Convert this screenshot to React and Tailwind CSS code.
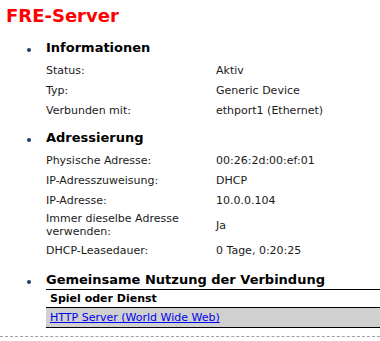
import React from 'react';

const sections = [
  {
    title: 'Informationen',
    rows: [
      ['Status:', 'Aktiv'],
      ['Typ:', 'Generic Device'],
      ['Verbunden mit:', 'ethport1 (Ethernet)'],
    ],
  },
  {
    title: 'Adressierung',
    rows: [
      ['Physische Adresse:', '00:26:2d:00:ef:01'],
      ['IP-Adresszuweisung:', 'DHCP'],
      ['IP-Adresse:', '10.0.0.104'],
      ['Immer dieselbe Adresse verwenden:', 'Ja', true],
      ['DHCP-Leasedauer:', '0 Tage, 0:20:25'],
    ],
  },
];

function Bullet() {
  return <span className="mt-[8px] ml-[27px] mr-[15px] block h-[4px] w-[4px] shrink-0 rounded-full bg-[#1f3b6b]" />;
}

function Section({ title, rows }) {
  return (
    <li className="flex">
      <Bullet />
      <div className="flex-1">
        <h2 className="text-[13px] font-bold leading-[16px] text-black">{title}</h2>
        <div className="mt-[4px] grid grid-cols-[170px_1fr] items-center">
          {rows.map(([label, value, wrap]) => (
            <React.Fragment key={label}>
              <div className={wrap ? 'py-[2px] pr-2 leading-[13px]' : 'py-[3.5px] pr-2 leading-[13px]'}>{label}</div>
              <div className="py-[3.5px] leading-[13px]">{value}</div>
            </React.Fragment>
          ))}
        </div>
      </div>
    </li>
  );
}

export default function App() {
  return (
    <div className="h-[341px] w-[380px] overflow-hidden bg-white font-['DejaVu_Sans',Verdana,sans-serif] text-[11px] text-[#1a1a1a]">
      <h1 className="pl-[6px] pt-[5px] text-[18px] font-bold leading-[22px] text-[#ff0000]">FRE-Server</h1>

      <ul className="mt-[13px] flex flex-col gap-[10px]">
        {sections.map((s) => (
          <Section key={s.title} {...s} />
        ))}

        {/* Shared connection */}
        <li className="mt-[2px] flex">
          <Bullet />
          <div className="flex-1">
            <h2 className="border-b border-black pb-[1px] text-[13px] font-bold leading-[16px] text-black">
              Gemeinsame Nutzung der Verbindung
            </h2>
            <div className="border-b border-black px-[4px] py-[2px] text-[11px] font-bold leading-[13px] text-black">
              Spiel oder Dienst
            </div>
            <div className="border-b border-black bg-[#d0d0d0] px-[4px] py-[3px] leading-[13px]">
              <a href="#" className="text-[#0000ee] underline">HTTP Server (World Wide Web)</a>
            </div>
          </div>
        </li>
      </ul>

      <div className="mt-[8px] border-t border-dashed border-[#a0a0a0]" />
    </div>
  );
}
